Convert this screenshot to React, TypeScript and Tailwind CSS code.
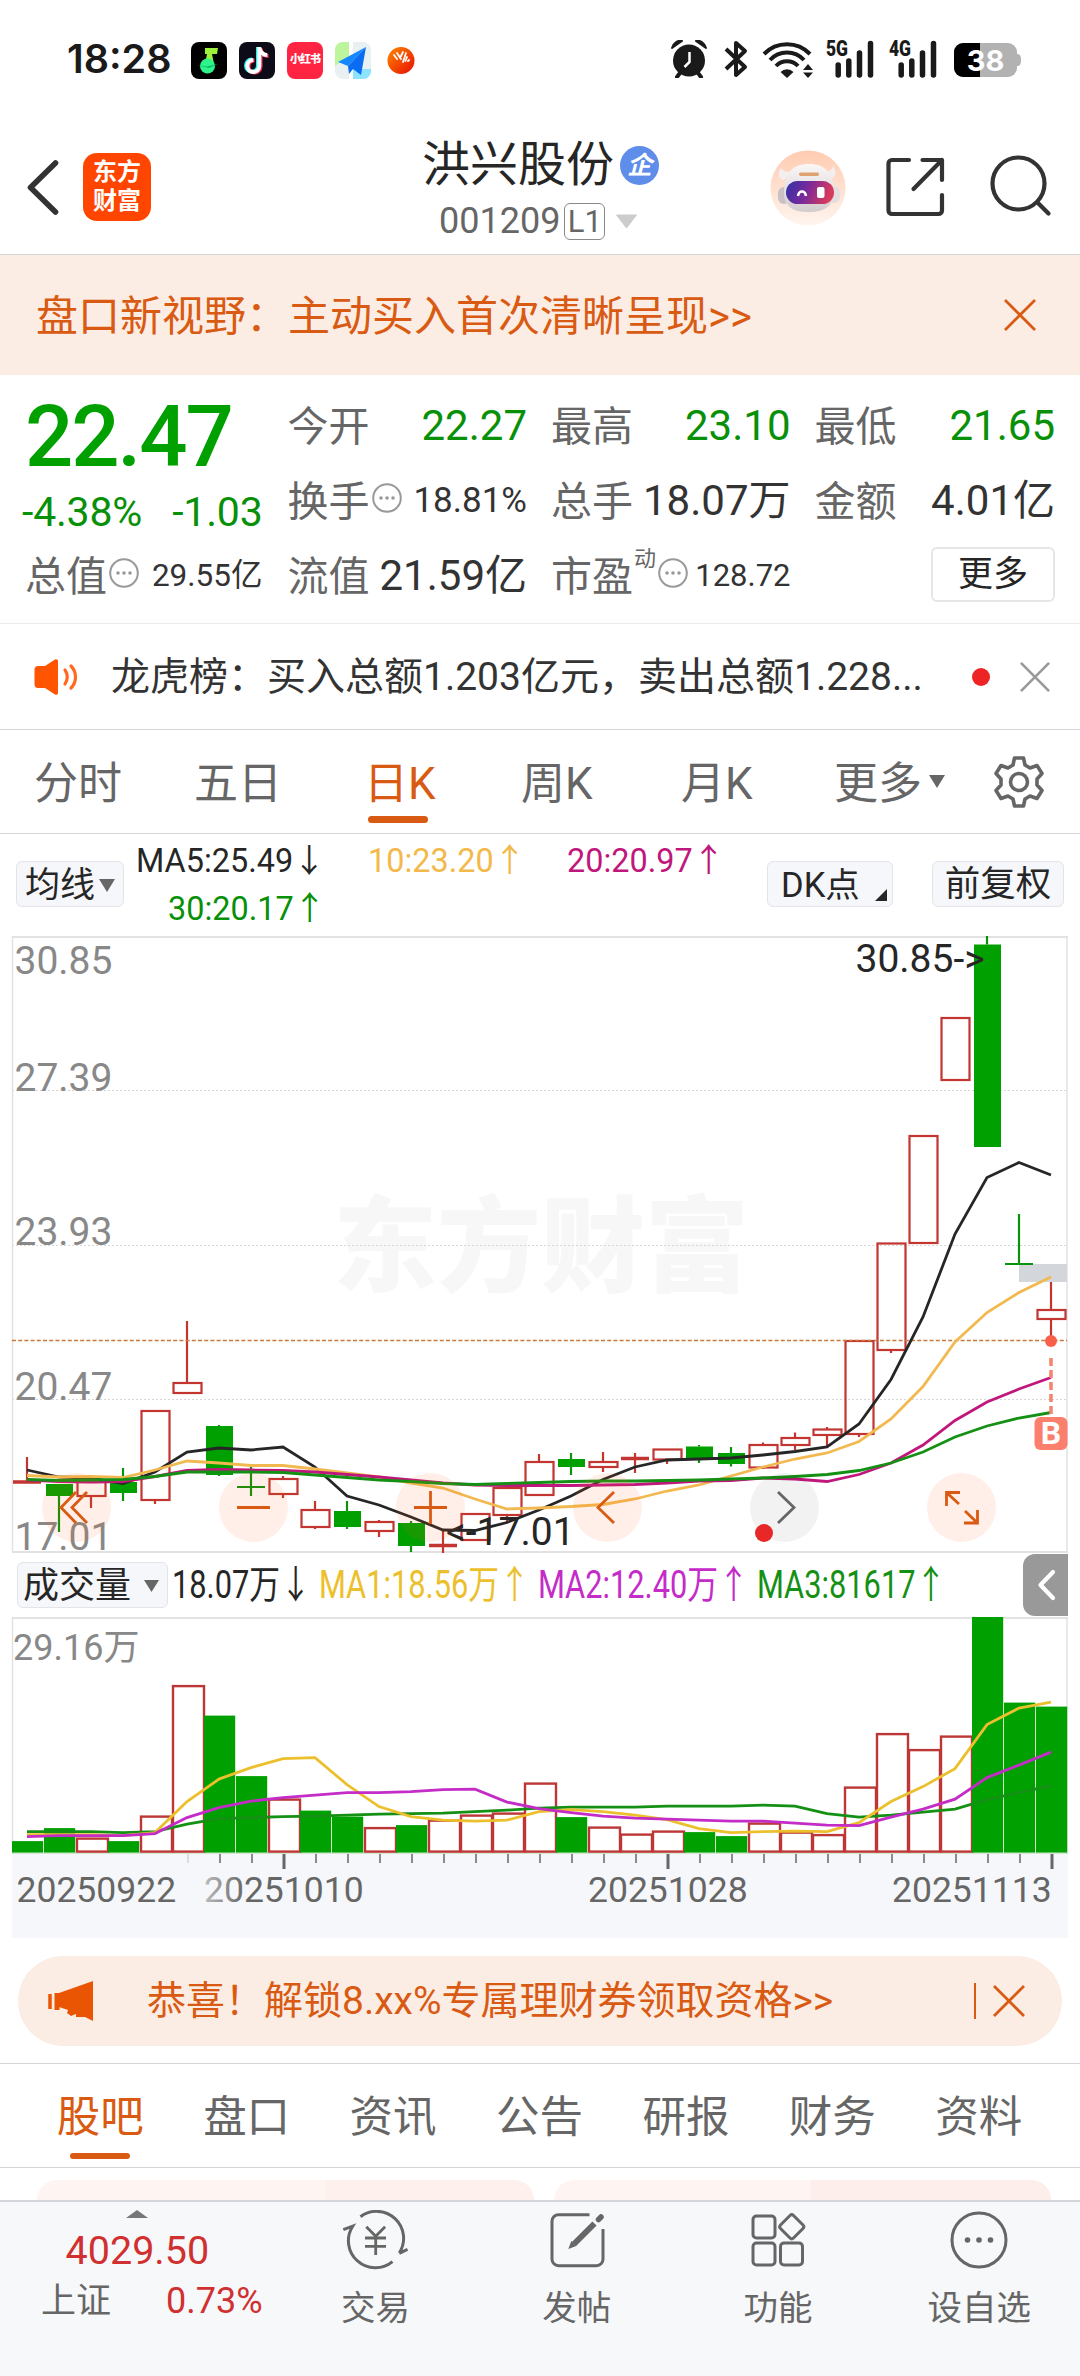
import type { ReactNode } from "react";

type Candle = {
  up: boolean;
  top: number;
  bottom: number;
  high: number;
  low: number;
};

const STEP = 32;
const FIRST = 27;
const cx = (i: number) => FIRST + i * STEP;

const c = (up: number, top: number, bottom: number, high = top, low = bottom): Candle => ({
  up: up === 1,
  top,
  bottom,
  high,
  low,
});

// y values share the same space as the price chart viewBox
const candles: Candle[] = [
  c(1, 1481, 1483, 1457, 1483),
  c(0, 1484, 1496, 1484, 1532),
  c(1, 1482, 1496, 1482, 1508),
  c(0, 1482, 1493, 1468, 1501),
  c(1, 1411, 1500, 1411, 1504),
  c(1, 1383, 1393, 1321, 1393),
  c(0, 1426, 1475, 1425, 1476),
  c(0, 1486, 1488, 1467, 1496),
  c(1, 1479, 1494, 1476, 1498),
  c(1, 1510, 1527, 1501, 1529),
  c(0, 1511, 1527, 1501, 1529),
  c(1, 1522, 1531, 1520, 1537),
  c(0, 1523, 1546, 1521, 1552),
  c(1, 1544.5, 1546.5, 1530, 1553),
  c(1, 1514, 1540),
  c(1, 1488, 1515, 1488, 1522),
  c(1, 1462, 1495, 1454, 1495),
  c(0, 1459, 1467, 1453, 1475),
  c(1, 1462, 1467, 1452, 1472),
  c(1, 1457.5, 1459.5, 1453, 1473),
  c(1, 1449.5, 1459.5, 1449.5, 1464),
  c(0, 1446.5, 1459, 1445, 1463),
  c(0, 1453, 1464, 1447, 1466.5),
  c(1, 1445, 1467.5, 1442.5, 1469),
  c(1, 1438, 1445, 1432.5, 1450),
  c(1, 1429.5, 1435, 1427, 1447),
  c(1, 1341, 1434, 1341, 1437),
  c(1, 1243.5, 1350, 1243.5, 1353),
  c(1, 1136, 1243),
  c(1, 1018, 1080),
  c(0, 944.5, 1147, 936, 1147),
  c(0, 1263, 1265, 1214, 1265),
  c(1, 1310, 1319, 1282, 1346),
];

const ma5 = [1470, 1477, 1478, 1483.5, 1472, 1452, 1448, 1450, 1447, 1467, 1496, 1505, 1517, 1530, 1530.5, 1522.5, 1510, 1496, 1479.5, 1467, 1460, 1459, 1458, 1455, 1451.5, 1447, 1424, 1379.5, 1317, 1234, 1177.5, 1162.5, 1175];
const ma10 = [1475.5, 1477, 1476.5, 1477.5, 1470, 1461, 1463, 1465.5, 1465.5, 1469, 1473, 1477, 1483, 1488, 1499, 1509, 1508, 1506.5, 1504.5, 1499, 1491, 1485, 1476, 1467, 1459, 1453, 1441.5, 1419, 1386.5, 1342, 1312.5, 1292.5, 1277];
const ma20 = [1480, 1481.5, 1482, 1481.5, 1476.5, 1470.5, 1469.5, 1470, 1470.5, 1472, 1474.5, 1477, 1480, 1483, 1485, 1485.5, 1485.5, 1485.5, 1485, 1484.5, 1483, 1481, 1480.5, 1478, 1479, 1481.5, 1474.5, 1463, 1445, 1420.5, 1402, 1389, 1377.5];
const ma30 = [1479.5, 1480.5, 1480, 1479.5, 1476.5, 1472, 1472, 1472, 1472.5, 1475, 1477.5, 1480, 1481.5, 1483.5, 1484.5, 1483.5, 1482.5, 1481.5, 1481, 1481, 1480.5, 1480, 1479, 1478, 1476.5, 1474.5, 1470.5, 1463, 1452, 1437, 1426, 1418, 1412.5];

const volumes: [number, number][] = [
  [0, 1842.5], [0, 1829.5], [1, 1840], [0, 1842.5], [1, 1818], [1, 1687.5], [0, 1717], [0, 1777.5], [1, 1801], [0, 1812], [0, 1818],
  [1, 1829.5], [0, 1826.5], [1, 1822], [1, 1817], [1, 1815], [1, 1785], [0, 1818.5], [1, 1829], [1, 1836], [1, 1833], [0, 1833.5],
  [0, 1837.5], [1, 1825], [1, 1834], [1, 1836.5], [1, 1789], [1, 1735.5], [1, 1751.5], [1, 1738], [0, 1617.5], [0, 1704], [0, 1708],
];

const vol1 = [1836, 1836, 1836, 1837, 1834, 1803, 1780.5, 1769, 1760, 1759, 1786, 1808, 1818, 1821.5, 1822.5, 1821.5, 1813, 1811, 1813, 1816.5, 1821, 1830, 1834, 1833, 1832.5, 1833, 1824, 1803, 1788, 1770, 1726, 1709.5, 1703.5];
const vol2 = [1838, 1837, 1837, 1837, 1835, 1819, 1809, 1802.5, 1799, 1796.5, 1794, 1794, 1793, 1791, 1790.5, 1803.5, 1810, 1814, 1817.5, 1819.5, 1820.5, 1821.5, 1822.5, 1822.5, 1824.5, 1826.5, 1827, 1818.5, 1810.5, 1800.5, 1779, 1766.5, 1753.5];
const vol3 = [1833, 1833, 1833, 1834, 1833, 1825.5, 1820, 1819, 1818, 1817.5, 1816.5, 1815.5, 1815, 1814.5, 1813, 1811.5, 1809.5, 1808.5, 1808.5, 1808.5, 1807.5, 1807.5, 1807.5, 1806.5, 1807.5, 1815, 1818.5, 1816.5, 1813.5, 1810.5, 1801, 1794, 1787];

const points = (ys: number[]) => ys.map((y, i) => `${cx(i)},${y}`).join(" ");

function Line({ ys, color }: { ys: number[]; color: string }) {
  return <polyline points={points(ys)} fill="none" stroke={color} strokeWidth="2.8" />;
}

function StatusBar() {
  return (
    <div className="flex h-[120px] shrink-0 items-start pt-[40px] pl-[67px]">
      <span className="w-[124px] font-['Inter'] text-[39.5px] leading-[38px] font-semibold text-[#1a1a1a]">18:28</span>
      <div className="mt-[2px] flex gap-3">
        <svg width="36" height="37" viewBox="0 0 36 37">
          <rect width="36" height="37" rx="8" fill="#000" />
          <path d="M14 6h13l-1 6h-5l2 10h-9l2-10h-2z" fill="#9cf13c" />
          <circle cx="16.500" cy="24" r="7.500" fill="#2df58c" />
          <path d="M6 23l10 1.500L27 22l-9 4z" fill="#0fb56a" />
        </svg>
        <svg width="36" height="37" viewBox="0 0 36 37">
          <rect width="36" height="37" rx="8" fill="#0e0b18" />
          <g fill="none" strokeWidth="4">
            <path d="M19 5v18.500a6 6 0 1 1-6-6M19 6c1 4 4 7 8 7" stroke="#25f4ee" />
            <path d="M21.500 6v18.500a6 6 0 1 1-6-6M21.500 7c1 4 4 7 8 7" stroke="#fe2c55" />
            <path d="M20.300 5v19a6 6 0 1 1-6-6M20.300 6c1 4 4 7 8 7" stroke="#fff" />
          </g>
        </svg>
        <div className="flex h-[37px] w-9 items-center justify-center rounded-lg bg-[#ff2442] text-[11px] font-black tracking-[-1px] whitespace-nowrap text-white">小红书</div>
        <svg width="36" height="37" viewBox="0 0 36 37">
          <rect width="36" height="37" rx="8" fill="#e9f0f2" />
          <path d="M8 0h6v14L0 24V8a8 8 0 0 1 8-8z" fill="#bdf59c" />
          <path d="M18 27h18v2a8 8 0 0 1-8 8H18z" fill="#8be3fd" />
          <path d="M14 0h4v37h-4z" fill="#fff" />
          <path d="M31 5 3 20l10 4z" fill="#1688ff" />
          <path d="M31 5 13 24l1 8 4-5 8 6z" fill="#0a6cf0" />
        </svg>
        <svg className="ml-[4px]" width="30" height="37" viewBox="0 0 30 37">
          <defs>
            <linearGradient id="app-orange" x1="0" x2="1" y1="0" y2="1">
              <stop offset="0%" stopColor="#ff8a00" />
              <stop offset="100%" stopColor="#e80c00" />
            </linearGradient>
          </defs>
          <circle cx="14" cy="18.500" r="13.500" fill="url(#app-orange)" />
          <path d="M7 13l3 4M10 11l4 6M16 10l-3 6M19 11l-3 9M20 15l-1.500 4M22 18l-1 1" stroke="#fff" strokeWidth="1.800" strokeLinecap="round" />
        </svg>
      </div>
      <div className="mr-[59px] ml-auto flex">
        <svg width="38" height="38" viewBox="0 0 38 38">
          <circle cx="19" cy="20.500" r="16" fill="#1a1a1a" />
          <path d="M2 8c1-5 6-8 10-7zM36 8c-1-5-6-8-10-7z" fill="#1a1a1a" stroke="#1a1a1a" strokeWidth="2" strokeLinejoin="round" />
          <path d="M10 33l-3 4M28 33l3 4" stroke="#1a1a1a" strokeWidth="4" strokeLinecap="round" />
          <path d="M19.500 12v10l-5 5" fill="none" stroke="#fff" strokeWidth="2.500" />
        </svg>
        <svg className="ml-[15px]" width="26" height="38" viewBox="0 0 26 38">
          <path d="M3 9l19 18-9 8V3l9 8L3 29" fill="none" stroke="#1a1a1a" strokeWidth="4" strokeLinejoin="round" />
        </svg>
        <svg className="ml-[13px]" width="52" height="38" viewBox="0 0 52 38">
          <g fill="none" stroke="#1a1a1a" strokeWidth="4">
            <path d="M2 14a32 32 0 0 1 46 0M8 20a23 23 0 0 1 34 0M14 26a15 15 0 0 1 22 0" />
          </g>
          <path d="M18.500 32a9 9 0 0 1 13 0L25 38z" fill="#1a1a1a" />
          <path d="M41 30l5-6 5 6zM41 32.500h10l-5 5.500z" fill="#1a1a1a" />
        </svg>
        {["5G", "4G"].map((net, i) => (
          <svg key={net} className={i === 0 ? "ml-[11px] overflow-visible" : "ml-[13px] overflow-visible"} width="50" height="38" viewBox="0 0 50 38">
            <text x="1" y="16" className="font-['Roboto']" fontSize="21.500" fontWeight="900" fill="#1a1a1a" textLength="22" lengthAdjust="spacingAndGlyphs">{net}</text>
            <path d="M13.200 25v10M23.800 21v14M34.500 13v22M45.500 3.500v31.500" stroke="#1a1a1a" strokeWidth="5.500" strokeLinecap="round" />
          </svg>
        ))}
        <svg className="ml-[16px]" width="67" height="38" viewBox="0 0 67 38">
          <path d="M63 14c3 0 4 2 4 6s-1 6-4 6z" fill="#b2b2b2" />
          <rect y="3" width="63" height="34" rx="9" fill="#b2b2b2" />
          <path d="M26 3v34H9a9 9 0 0 1-9-9V12a9 9 0 0 1 9-9z" fill="#000" />
          <text x="31.500" y="31" textAnchor="middle" className="font-['Inter']" fontSize="29" fontWeight="700" fill="#fff">38</text>
        </svg>
      </div>
    </div>
  );
}

function Header() {
  return (
    <div className="flex h-[135px] shrink-0 border-b border-[#d4d4d6]">
      <svg className="mt-[38px] ml-[24px]" width="38" height="60" viewBox="0 0 38 60">
        <path d="M31.500 5 6.500 29.500l25 24.500" fill="none" stroke="#333" strokeWidth="5.600" strokeLinecap="round" strokeLinejoin="round" />
      </svg>
      <div className="mt-[33px] ml-[21px] flex size-[68px] flex-col items-center justify-center rounded-[14px] bg-[#ff4500] text-[24px] leading-[29px] font-bold text-white">
        <span>东方</span>
        <span>财富</span>
      </div>
      <div className="ml-[271px] w-[239px] pt-[18px]">
        <div className="flex items-center">
          <h1 className="text-[48px] leading-[54px] text-[#262626]">洪兴股份</h1>
          <span className="ml-[6px] flex size-[39px] items-center justify-center rounded-full bg-[#5f8eea] text-[25px] leading-none font-bold text-white italic">企</span>
        </div>
        <div className="mt-[11px] flex items-center pl-[17px] text-[#666]">
          <span className="text-[36px] leading-[37px]">001209</span>
          <span className="ml-[4px] flex h-[37px] w-[41px] items-center justify-center rounded-md border-[1.5px] border-[#8a8a8a] text-[31px] leading-none">L1</span>
          <svg className="ml-[10px]" width="23" height="15" viewBox="0 0 23 15">
            <path d="M1.500 1h20L11.500 14z" fill="#ccc" stroke="#ccc" strokeLinejoin="round" />
          </svg>
        </div>
      </div>
      <svg className="mt-[30px] ml-[109px]" width="76" height="76" viewBox="0 0 76 76">
        <defs>
          <linearGradient id="bot-bg" x1="0" x2="0" y1="0" y2="1">
            <stop offset="0%" stopColor="#ffcbb0" />
            <stop offset="100%" stopColor="#fff5ef" />
          </linearGradient>
          <linearGradient id="bot-shell" x1="0" x2="0" y1="0" y2="1">
            <stop offset="0%" stopColor="#faf7f7" />
            <stop offset="100%" stopColor="#d2cccf" />
          </linearGradient>
          <linearGradient id="bot-face" x1="0" x2="1" y1="0" y2="0.200">
            <stop offset="0%" stopColor="#2f33a8" />
            <stop offset="50%" stopColor="#7a2a9a" />
            <stop offset="100%" stopColor="#d83a5c" />
          </linearGradient>
        </defs>
        <circle cx="38" cy="38" r="37.500" fill="url(#bot-bg)" />
        <path d="M11 18c-4 6-3 11 3 12l7-8c-5 0-8-1-10-4zM63 16c4 5 3 11-2 13l-8-7c6 0 9-2 10-6z" fill="#f4eeee" />
        <rect x="8" y="37" width="12" height="17" rx="6" fill="#c9c1c4" />
        <rect x="58" y="36" width="12" height="17" rx="6" fill="#e4dee0" />
        <path d="M14 42c0-18 8-28 25-28s24 10 25 26c0 16-9 22-25 22s-25-5-25-20z" fill="url(#bot-shell)" />
        <rect x="29" y="22.500" width="20" height="3.500" rx="1.700" fill="#dfa16e" />
        <rect x="16" y="31" width="48" height="23" rx="11.500" fill="url(#bot-face)" />
        <path d="M28 46c1-6 7-6 8 0" fill="none" stroke="#fff" strokeWidth="2.500" />
        <rect x="47" y="37" width="7.500" height="11" rx="2" fill="#fff" />
      </svg>
      <svg className="mt-[36px] ml-[40px]" width="60" height="62" viewBox="0 0 60 62">
        <path d="M23 4H6a3.500 3.500 0 0 0-3.500 3.500v47A3.500 3.500 0 0 0 6 58h46.500a3.500 3.500 0 0 0 3.500-3.500V39M36.500 4h19.500v20M56 4 27.500 33" fill="none" stroke="#333" strokeWidth="4.200" strokeLinecap="round" strokeLinejoin="round" />
      </svg>
      <svg className="mt-[34px] ml-[43px]" width="64" height="64" viewBox="0 0 64 64">
        <circle cx="29.500" cy="29.500" r="26" fill="none" stroke="#333" strokeWidth="4.200" />
        <path d="M48.500 48.500 59.500 59.500" stroke="#333" strokeWidth="4.200" strokeLinecap="round" />
      </svg>
    </div>
  );
}

function Close({ size, color }: { size: number; color: string }) {
  return (
    <svg width={size} height={size} viewBox="0 0 32 32">
      <path d="M1 1l30 30M31 1 1 31" stroke={color} strokeWidth="2.800" />
    </svg>
  );
}

function Info() {
  return (
    <svg className="mb-[9px] ml-[2px] shrink-0" width="30" height="30" viewBox="0 0 30 30">
      <circle cx="15" cy="15" r="13.800" fill="none" stroke="#999" strokeWidth="2" />
      <circle cx="9" cy="15" r="1.800" fill="#999" />
      <circle cx="15" cy="15" r="1.800" fill="#999" />
      <circle cx="21" cy="15" r="1.800" fill="#999" />
    </svg>
  );
}

function Stat({ label, children }: { label: ReactNode; children: ReactNode }) {
  return (
    <div className="flex h-[42px] items-center justify-between leading-[42px]">
      <div className="flex items-center pt-[2px] text-[41px] text-[#666]">{label}</div>
      {children}
    </div>
  );
}

function Quote() {
  return (
    <div className="flex h-[249px] shrink-0 border-b border-[#ebebeb] px-[25px] pt-[30px]">
      <div className="w-[238px]">
        <div className="h-[64px] text-[85px] leading-[64px] font-medium tracking-[-2px] text-[#00a000]">22.47</div>
        <div className="mt-[19px] -ml-[3px] flex h-[48px] items-center justify-between text-[41px] leading-[48px] tracking-[-0.2px] text-[#089008]">
          <span>-4.38%</span>
          <span>-1.03</span>
        </div>
        <div className="mt-[19px]">
          <Stat label={<>总值<Info /></>}>
            <span className="text-[31.5px] text-[#333]">29.55亿</span>
          </Stat>
        </div>
      </div>
      <div className="ml-[25px] grid w-[240px] auto-rows-[42px] content-start gap-y-[33px]">
        <Stat label="今开"><span className="text-[42px] text-[#089008]">22.27</span></Stat>
        <Stat label={<>换手<Info /></>}><span className="text-[35px] text-[#333]">18.81%</span></Stat>
        <Stat label="流值"><span className="text-[42px] text-[#333]">21.59亿</span></Stat>
      </div>
      <div className="ml-[24px] grid w-[240px] auto-rows-[42px] content-start gap-y-[33px]">
        <Stat label="最高"><span className="text-[42px] text-[#089008]">23.10</span></Stat>
        <Stat label="总手"><span className="text-[42px] text-[#333]">18.07万</span></Stat>
        <Stat label={<>市盈<sup className="top-0 mb-[37px] ml-px text-[22px] leading-none">动</sup><Info /></>}>
          <span className="text-[31px] text-[#333]">128.72</span>
        </Stat>
      </div>
      <div className="ml-[24px] grid w-[241px] auto-rows-[42px] content-start gap-y-[33px]">
        <Stat label="最低"><span className="text-[42px] text-[#089008]">21.65</span></Stat>
        <Stat label="金额"><span className="text-[42px] text-[#333]">4.01亿</span></Stat>
        <button type="button" className="-mt-[8px] h-[55px] w-[124px] justify-self-end rounded-md border-2 border-[#e6e6e6] text-[35px] leading-none text-[#262626]">更多</button>
      </div>
    </div>
  );
}

function News() {
  return (
    <div className="flex h-[106px] shrink-0 items-center border-b border-[#d4d4d6] pl-[33px]">
      <svg width="46" height="36" viewBox="0 0 46 36">
        <path d="M1.500 10.500C1.500 8.500 3 7 5 7h7l10-6.500c1.500-.8 3 0 3 1.500v32c0 1.500-1.500 2.300-3 1.500L12 29H5c-2 0-3.500-1.500-3.500-3.500z" fill="#ff5500" />
        <path d="M32 11c3 4 3 10 0 14M38 7c6 6 6 16 0 22" fill="none" stroke="#ff6a20" strokeWidth="3.200" strokeLinecap="round" />
      </svg>
      <span className="ml-[32px] w-[861px] text-[39px] leading-[50px] whitespace-nowrap text-[#333]">龙虎榜：买入总额1.203亿元，卖出总额1.228...</span>
      <span className="size-[18px] rounded-full bg-[#ee2424]" />
      <span className="ml-[30px]"><Close size={30} color="#999" /></span>
    </div>
  );
}

const periods = [
  ["分时", "w-[160px]"],
  ["五日", "w-[170px]"],
  ["日K", "w-[157px]"],
  ["周K", "w-[160px]"],
  ["月K", "w-[153px]"],
];

function PeriodTabs() {
  return (
    <div className="flex h-[104px] shrink-0 items-center border-b border-[#d4d4d6] pl-[34px] text-[44px] leading-[60px] text-[#666]">
      {periods.map(([label, width]) => (
        <div key={label} className={`${width} pt-[4px]`}>
          {label === "日K" ? (
            <span className="relative text-[#d95a12]">
              {label}
              <i className="absolute -bottom-[13px] left-[4px] h-[7px] w-[60px] rounded-full bg-[#d95a12]" />
            </span>
          ) : (
            label
          )}
        </div>
      ))}
      <span className="pt-[4px]">更多</span>
      <svg className="ml-[7px]" width="16" height="13" viewBox="0 0 16 13">
        <path d="M0 0h16L8 13z" fill="#666" />
      </svg>
      <svg className="ml-[48px]" width="52" height="52" viewBox="0 0 52 52">
        <path d="M21.500 2h9l1.500 7 5 3 7-2.500 5 8L44 23v6l5 5.500-5 8-7-2.500-5 3-1.500 7h-9L20 43l-5-3-7 2.500-5-8L8 29v-6l-5-5.500 5-8L15 12l5-3z" fill="none" stroke="#666" strokeWidth="3.600" strokeLinejoin="round" />
        <circle cx="26" cy="26" r="8.500" fill="none" stroke="#666" strokeWidth="3.600" />
      </svg>
    </div>
  );
}

function MaRow() {
  return (
    <div className="flex h-[102px] shrink-0 items-start text-[32.400px] leading-[48px]">
      <button type="button" className="mt-[27px] ml-[16px] flex h-[46px] w-[108px] items-center rounded-md border border-[#e2e4e8] bg-[#f6f7fa] pt-[2px] pl-[8px] text-[35px] leading-none text-[#262626]">
        均线
        <svg className="ml-[4px]" width="16" height="13" viewBox="0 0 16 13">
          <path d="M0 0h16L8 13z" fill="#666" />
        </svg>
      </button>
      <div className="ml-[12px] w-[631px] pt-[3px]">
        <div className="flex">
          <span className="w-[232px] text-[#262626]">MA5:25.49↓</span>
          <span className="w-[199px] text-[#f2b94b]">10:23.20↑</span>
          <span className="text-[#c0177c]">20:20.97↑</span>
        </div>
        <div className="pl-[32px] text-[#089008]">30:20.17↑</div>
      </div>
      <button type="button" className="relative mt-[27px] h-[46px] w-[126px] rounded-md border border-[#e2e4e8] bg-[#f6f7fa] pt-[2px] pl-[13px] text-left text-[34.500px] leading-none text-[#262626]">
        DK点
        <svg className="absolute right-[5px] bottom-[5px]" width="12" height="12" viewBox="0 0 12 12">
          <path d="M12 0v12H0z" fill="#262626" />
        </svg>
      </button>
      <button type="button" className="mt-[27px] ml-[39px] h-[46px] w-[132px] rounded-md border border-[#e2e4e8] bg-[#f6f7fa] pt-[2px] text-[35.500px] leading-none text-[#262626]">前复权</button>
    </div>
  );
}

function CandleShape({ candle, x }: { candle: Candle; x: number }) {
  const color = candle.up ? "#c23531" : "#0a920a";
  const flat = candle.bottom - candle.top <= 2;
  return (
    <g stroke={color} strokeWidth="2.2">
      {candle.high < candle.top && <path d={`M${x} ${candle.high}V${candle.top}`} />}
      {candle.low > candle.bottom && <path d={`M${x} ${candle.bottom}V${candle.low}`} />}
      {flat ? (
        <path d={`M${x - 14} ${candle.top + 1}h28`} strokeWidth={candle.up ? 3.5 : 2} />
      ) : candle.up ? (
        <rect x={x - 13.5} y={candle.top} width="28" height={candle.bottom - candle.top} fill="none" />
      ) : (
        <rect x={x - 13} y={candle.top} width="27" height={candle.bottom - candle.top} fill="#00a000" stroke="none" />
      )}
    </g>
  );
}

function RoundButton({ muted, children }: { muted?: boolean; children: ReactNode }) {
  return (
    <button type="button" className={muted ? "relative size-[69px] rounded-full bg-black/5" : "relative size-[69px] rounded-full bg-[#ff6414]/10"}>
      <svg width="69" height="69" viewBox="0 0 69 69" fill="none" stroke={muted ? "#666" : "#d95a12"} strokeWidth="2.800">
        {children}
      </svg>
      {muted && <i className="absolute bottom-0 left-[5px] size-[18px] rounded-full bg-[#e82828]" />}
    </button>
  );
}

function PriceChart() {
  return (
    <div className="relative h-[617px] shrink-0">
      <svg className="block" width="1080" height="617" viewBox="0 936 1080 617">
        <text x="333" y="1284" fontSize="104" fontWeight="900" fill="#f7f7f7">东方财富</text>
        <g stroke="#d6d6d6" strokeWidth="1" strokeDasharray="2 2">
          <path d="M12 1090.500h1055M12 1245.500h1055M12 1399.500h1055" />
        </g>
        <path d="M12.500 936v616M1067 936v616" stroke="#e2e2e4" strokeWidth="1.500" />
        <path d="M12 937h1056M12 1552h1056" stroke="#e2e2e4" strokeWidth="2" />
        <rect x="1019" y="1264" width="48" height="18" fill="#d3d6db" />
        {candles.map((candle, i) => (
          <CandleShape key={i} candle={candle} x={cx(i)} />
        ))}
        <path d="M12 1340.500h1055" stroke="#c8793f" strokeWidth="1.300" strokeDasharray="4 2.200" />
        <g fontSize="39" fill="#888">
          <text x="14.500" y="974">30.85</text>
          <text x="14.500" y="1090.500">27.39</text>
          <text x="14.500" y="1245">23.93</text>
          <text x="14.500" y="1399.500">20.47</text>
          <text x="14.500" y="1549.500">17.01</text>
        </g>
        <Line ys={ma5} color="#262626" />
        <Line ys={ma10} color="#f2b950" />
        <Line ys={ma20} color="#c0177c" />
        <Line ys={ma30} color="#149014" />
        <g fontSize="39" fill="#262626">
          <text x="855.500" y="971.500">30.85-&gt;</text>
          <text x="446" y="1545">&lt;-17.01</text>
        </g>
        <circle cx="1051" cy="1341" r="6" fill="#f9604c" />
        <path d="M1051 1358v57" stroke="#f5836f" strokeWidth="3.500" strokeDasharray="8 4" />
        <rect x="1034.500" y="1417" width="33" height="33" rx="6" fill="#fb7f6d" />
        <text x="1051" y="1444" textAnchor="middle" fontSize="32" fontWeight="700" fill="#fff">B</text>
      </svg>
      <div className="absolute bottom-[11px] left-[42px] flex gap-[108px]">
        <RoundButton><path d="M34 19 19 34.500 34 50M45 19 30 34.500 45 50" /></RoundButton>
        <RoundButton><path d="M18 34.500h33" /></RoundButton>
        <RoundButton><path d="M18 34.500h33M34.500 18v33" /></RoundButton>
        <RoundButton><path d="M41 19 25 34.500 41 50" /></RoundButton>
        <RoundButton muted><path d="M28 19l16 15.500L28 50" /></RoundButton>
        <RoundButton>
          <path d="M33 19.500H19.500V33M19.500 19.500 32 31M37 50h13.500V37M50.500 50 38 38" />
        </RoundButton>
      </div>
    </div>
  );
}

function VolumeLegend() {
  return (
    <div className="flex h-[64px] shrink-0 items-center pl-[17px]">
      <button type="button" className="flex h-[46px] w-[151px] shrink-0 items-center rounded-md border border-[#e2e4e8] bg-[#f6f7fa] pt-[2px] pl-[5px] text-[36px] leading-none text-[#262626]">
        成交量
        <svg className="ml-[13px]" width="15" height="12" viewBox="0 0 15 12">
          <path d="M0 0h15L7.500 12z" fill="#666" />
        </svg>
      </button>
      <div className="ml-[4px] flex w-[851px] origin-left scale-x-[0.8] gap-[10px] text-[38.500px] leading-[50px] whitespace-nowrap">
        <span className="text-[#262626]">18.07万↓</span>
        <span className="text-[#ecc02c]">MA1:18.56万↑</span>
        <span className="text-[#c42cc8]">MA2:12.40万↑</span>
        <span className="text-[#149014]">MA3:81617↑</span>
      </div>
      <button type="button" className="h-[62px] w-[45px] shrink-0 rounded-l-xl bg-[#999]">
        <svg width="45" height="62" viewBox="0 0 45 62">
          <path d="M30 18 17.500 31 30 44" fill="none" stroke="#fff" strokeWidth="4.200" strokeLinecap="round" strokeLinejoin="round" />
        </svg>
      </button>
    </div>
  );
}

function VolumeChart() {
  return (
    <svg className="block shrink-0" width="1080" height="321" viewBox="0 1617 1080 321">
      <defs>
        <linearGradient id="date-fade" gradientUnits="userSpaceOnUse" x1="200" x2="245" y1="0" y2="0">
          <stop offset="0%" stopColor="#c4c4c4" />
          <stop offset="100%" stopColor="#666" />
        </linearGradient>
      </defs>
      <rect x="12" y="1853" width="1056" height="85" fill="#f6f7fa" />
      <path d="M12.500 1617v236M1067 1617v236" stroke="#e2e2e4" strokeWidth="1.500" />
      <path d="M12 1618h1056" stroke="#e2e2e4" strokeWidth="2" />
      <text x="13" y="1659.500" fontSize="36" fill="#888">29.16万</text>
      <g transform="translate(0 -1.4)">
        {volumes.map(([up, top], i) =>
          up ? (
            <rect key={i} x={cx(i) - 14} y={top} width="31" height={1853 - top} fill="#fff" stroke="#bc3735" strokeWidth="2.400" />
          ) : (
            <rect key={i} x={cx(i) - 15} y={top} width="31.200" height={1854 - top} fill="#00a000" />
          )
        )}
        <path d="M12 1854.900h1056" stroke="#cfe6cf" strokeWidth="1" />
        <Line ys={vol3} color="#149014" />
        <Line ys={vol1} color="#ecc02c" />
        <Line ys={vol2} color="#c42cc8" />
      </g>
      {volumes.map((_, i) => {
        if (i < 5) return null;
        const major = i === 8 || i === 20 || i === 32;
        return (
          <path
            key={i}
            d={`M${cx(i) + 1} 1854v${major ? 15 : 9}`}
            stroke={i === 5 ? "#ddd" : major ? "#666" : "#8a8a8a"}
            strokeWidth={major ? 3 : 2}
          />
        );
      })}
      <g fontSize="35.500" fill="#666">
        <text x="16.500" y="1901.500">20250922</text>
        <text x="204" y="1901.500" fill="url(#date-fade)">20251010</text>
        <text x="588" y="1901.500">20251028</text>
        <text x="892" y="1901.500">20251113</text>
      </g>
    </svg>
  );
}

function Promo() {
  return (
    <div className="mx-[18px] mt-[18px] flex h-[90px] shrink-0 items-center rounded-full bg-[#fcede4] pl-[30px] text-[#d95a12]">
      <svg width="46" height="40" viewBox="0 0 46 40">
        <path d="M45 0v40l-8-4H28v-3l-5 2-4-3 1-3-9-3V12z" fill="#ea5504" />
        <path d="M2 13v15" stroke="#ea5504" strokeWidth="3.500" />
        <path d="M9 12v17" stroke="#ea5504" strokeWidth="5" />
      </svg>
      <span className="ml-[53px] w-[827px] text-[39px] leading-[50px] whitespace-nowrap">恭喜！解锁8.xx%专属理财券领取资格&gt;&gt;</span>
      <i className="h-[36px] w-[1.500px] bg-[#d95a12]" />
      <span className="ml-[17px]"><Close size={32} color="#d95a12" /></span>
    </div>
  );
}

const sections = ["股吧", "盘口", "资讯", "公告", "研报", "财务", "资料"];

function SectionTabs() {
  return (
    <div className="mt-[17px] flex h-[105px] shrink-0 items-center border-y border-[#d4d4d6] pt-[5px] pr-[28px] pl-[27px] text-[43.500px] leading-[60px] text-[#666]">
      {sections.map((label, i) => (
        <div key={label} className={i === 0 ? "relative flex-1 text-center text-[#d95a12]" : "flex-1 text-center"}>
          {label}
          {i === 0 && <i className="absolute -bottom-[11px] left-1/2 h-[6px] w-[60px] -translate-x-1/2 rounded-full bg-[#d95a12]" />}
        </div>
      ))}
    </div>
  );
}

function BottomItem({ label, children }: { label: string; children: ReactNode }) {
  return (
    <button type="button" className="flex w-[201.500px] flex-col items-center pt-[8px] text-[34.500px] leading-[44px] text-[#666]">
      <svg width="66" height="62" viewBox="0 0 66 62" fill="none" stroke="#666" strokeWidth="3">
        {children}
      </svg>
      <span className="mt-[14px]">{label}</span>
    </button>
  );
}

function BottomBar() {
  return (
    <div className="flex h-[176px] shrink-0 border-t-2 border-[#d3d7dc] bg-[#f7f8fa]">
      <div className="flex w-[275px] flex-col items-center text-[#d03030]">
        <svg className="mt-[8px]" width="22" height="8" viewBox="0 0 22 8">
          <path d="M0 8 11 0l11 8z" fill="#777" />
        </svg>
        <span className="mt-[9px] text-[39.500px] leading-[48px]">4029.50</span>
        <div className="mt-px flex w-full items-center pl-[41px] leading-[48px]">
          <span className="pt-[2px] text-[35px] text-[#666]">上证</span>
          <span className="ml-[55px] text-[36px]">0.73%</span>
        </div>
      </div>
      <BottomItem label="交易">
        <path d="M18.500 6.700A27 27 0 0 1 57.300 43M1.300 19.700l9.400-3.500A27 27 0 0 0 50.500 51.700M57.300 43.300l8.200-4" />
        <path d="M24.300 16.700l9.400 9.500 9.400-9.500M23 28h21M23 36.300h21M33.700 26v19" strokeWidth="2.800" />
      </BottomItem>
      <BottomItem label="发帖">
        <path d="M45.500 4.700H14.500a6.500 6.500 0 0 0-6.500 6.500v38a6.500 6.500 0 0 0 6.500 6.500h38a6.500 6.500 0 0 0 6.500-6.500V19" />
        <path d="M30 34 50.500 13.500" strokeWidth="6" />
        <path d="M54.500 9.500 57 7" strokeWidth="5.500" strokeLinecap="round" />
        <path d="M24.300 39l3-8 5 5z" fill="#666" stroke="none" />
      </BottomItem>
      <BottomItem label="功能">
        <rect x="8" y="6" width="22" height="22" rx="3.500" />
        <rect x="8" y="33" width="22" height="22" rx="3.500" />
        <rect x="35.500" y="33" width="22" height="22" rx="3.500" />
        <path d="M45 5.500a2.500 2.500 0 0 1 3.500 0l9.500 9.500a2.500 2.500 0 0 1 0 3.500l-9.500 9.500a2.500 2.500 0 0 1-3.500 0l-9.500-9.500a2.500 2.500 0 0 1 0-3.500z" />
      </BottomItem>
      <BottomItem label="设自选">
        <circle cx="33" cy="30" r="27" />
        <g fill="#666" stroke="none">
          <circle cx="21.500" cy="30" r="2.800" />
          <circle cx="33" cy="30" r="2.800" />
          <circle cx="44.500" cy="30" r="2.800" />
        </g>
      </BottomItem>
    </div>
  );
}

export default function App() {
  return (
    <div className="flex h-[2376px] w-[1080px] flex-col overflow-hidden bg-white font-['Roboto','Noto_Sans_CJK_SC',sans-serif]">
      <StatusBar />
      <Header />
      <div className="flex h-[120px] shrink-0 items-center justify-between bg-[#fcede4] pr-[44px] pl-[36px] text-[42px] leading-[50px] text-[#d95a12]">
        <span className="pt-[4px]">盘口新视野：主动买入首次清晰呈现&gt;&gt;</span>
        <Close size={32} color="#d95a12" />
      </div>
      <Quote />
      <News />
      <PeriodTabs />
      <MaRow />
      <PriceChart />
      <VolumeLegend />
      <VolumeChart />
      <Promo />
      <SectionTabs />
      <div className="flex h-[32px] shrink-0 gap-[20px] pt-[12px] pl-[37px]">
        <div className="flex h-[20px] w-[497px] overflow-hidden rounded-t-[24px] bg-[#fef5f2]">
          <div className="ml-auto w-[208px] bg-[#fdf0ed]" />
        </div>
        <div className="flex h-[20px] w-[497px] overflow-hidden rounded-t-[24px] bg-[#fef5f2]">
          <div className="ml-auto w-[240px] bg-[#fdeeeb]" />
        </div>
      </div>
      <BottomBar />
    </div>
  );
}
